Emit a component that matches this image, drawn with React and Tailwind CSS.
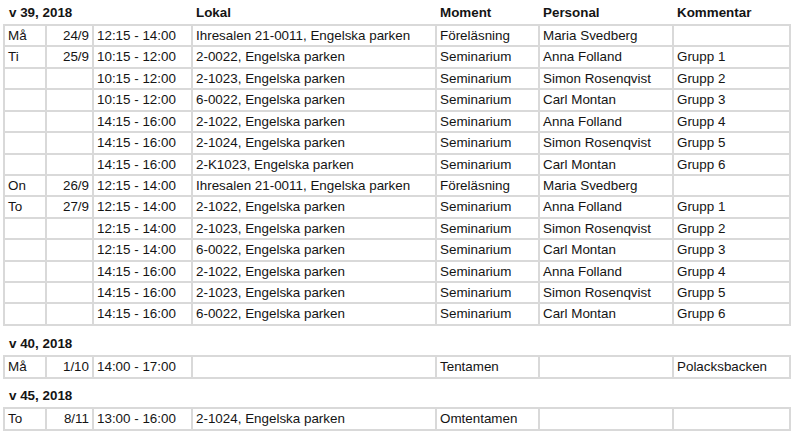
const cols = "grid grid-cols-[42px_47px_99px_244px_103px_134px_117px]";

const weeks = [
  {
    title: "v 39, 2018",
    showHead: true,
    gap: "",
    rowH: "h-[21.43px]",
    rows: [
      ["Må", "24/9", "12:15 - 14:00", "Ihresalen 21-0011, Engelska parken", "Föreläsning", "Maria Svedberg", ""],
      ["Ti", "25/9", "10:15 - 12:00", "2-0022, Engelska parken", "Seminarium", "Anna Folland", "Grupp 1"],
      ["", "", "10:15 - 12:00", "2-1023, Engelska parken", "Seminarium", "Simon Rosenqvist", "Grupp 2"],
      ["", "", "10:15 - 12:00", "6-0022, Engelska parken", "Seminarium", "Carl Montan", "Grupp 3"],
      ["", "", "14:15 - 16:00", "2-1022, Engelska parken", "Seminarium", "Anna Folland", "Grupp 4"],
      ["", "", "14:15 - 16:00", "2-1024, Engelska parken", "Seminarium", "Simon Rosenqvist", "Grupp 5"],
      ["", "", "14:15 - 16:00", "2-K1023, Engelska parken", "Seminarium", "Carl Montan", "Grupp 6"],
      ["On", "26/9", "12:15 - 14:00", "Ihresalen 21-0011, Engelska parken", "Föreläsning", "Maria Svedberg", ""],
      ["To", "27/9", "12:15 - 14:00", "2-1022, Engelska parken", "Seminarium", "Anna Folland", "Grupp 1"],
      ["", "", "12:15 - 14:00", "2-1023, Engelska parken", "Seminarium", "Simon Rosenqvist", "Grupp 2"],
      ["", "", "12:15 - 14:00", "6-0022, Engelska parken", "Seminarium", "Carl Montan", "Grupp 3"],
      ["", "", "14:15 - 16:00", "2-1022, Engelska parken", "Seminarium", "Anna Folland", "Grupp 4"],
      ["", "", "14:15 - 16:00", "2-1023, Engelska parken", "Seminarium", "Simon Rosenqvist", "Grupp 5"],
      ["", "", "14:15 - 16:00", "6-0022, Engelska parken", "Seminarium", "Carl Montan", "Grupp 6"],
    ],
  },
  {
    title: "v 40, 2018",
    gap: "mt-[7px]",
    rowH: "h-[22px]",
    rows: [["Må", "1/10", "14:00 - 17:00", "", "Tentamen", "", "Polacksbacken"]],
  },
  {
    title: "v 45, 2018",
    gap: "mt-[6px]",
    rowH: "h-[22px]",
    rows: [["To", "8/11", "13:00 - 16:00", "2-1024, Engelska parken", "Omtentamen", "", ""]],
  },
];

function Week({ week }) {
  return (
    <div className={week.gap}>
      <div className={`${cols} pl-[2px] h-[22px] items-center font-bold`}>
        <div className="col-span-3 pl-[4px]">{week.title}</div>
        {week.showHead ? (
          <>
            <div className="pl-[3px]">Lokal</div>
            <div className="pl-[3px]">Moment</div>
            <div className="pl-[3px]">Personal</div>
            <div className="pl-[3px]">Kommentar</div>
          </>
        ) : null}
      </div>
      <div className="border-t-2 border-l-2 border-[#d9d9d9] w-fit">
        {week.rows.map((r, i) => (
          <div key={i} className={`${cols} ${week.rowH}`}>
            {r.map((c, j) => (
              <div
                key={j}
                className={`border-r-2 border-b-2 border-[#d9d9d9] flex items-center whitespace-nowrap overflow-hidden ${
                  j === 1 ? "justify-end pr-[3px]" : "pl-[3px]"
                }`}
              >
                {c}
              </div>
            ))}
          </div>
        ))}
      </div>
    </div>
  );
}

export default function App() {
  return (
    <div
      className="bg-white w-[797px] h-[438px] pl-[3px] pt-[2px] text-[13.4px] text-[#141414] leading-none"
      style={{ fontFamily: '"Liberation Sans", Arial, sans-serif' }}
    >
      {weeks.map((w) => (
        <Week key={w.title} week={w} />
      ))}
    </div>
  );
}
